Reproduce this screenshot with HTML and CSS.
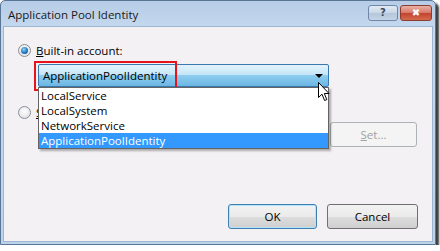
FILE: index.html
```html
<!DOCTYPE html>
<html lang="en">
<head>
  <meta charset="UTF-8">
  <title>Application Pool Identity</title>
  <link rel="stylesheet" href="styles.css">
</head>
<body>
  <div class="window">
    <div class="titlebar">
      <span class="title">Application Pool Identity</span>
      <div class="caption-btns">
        <div class="cap help">?</div>
        <div class="cap close">&#10006;</div>
      </div>
    </div>

    <div class="content">
      <div class="option">
        <span class="radio checked"></span>
        <span class="label"><u>B</u>uilt-in account:</span>
      </div>

      <div class="combo-wrap">
        <div class="combo">
          <span>ApplicationPoolIdentity</span>
          <span class="arrow"></span>
        </div>
        <div class="highlight"></div>
        <ul class="droplist">
          <li>LocalService</li>
          <li>LocalSystem</li>
          <li>NetworkService</li>
          <li class="selected">ApplicationPoolIdentity</li>
        </ul>
        <svg class="cursor" width="13" height="20" viewBox="0 0 13 20">
          <path d="M0.5 0.5 L0.5 15.5 L4 12.2 L6.6 18.5 L8.8 17.6 L6.3 11.5 L11 11.5 Z" fill="#fff" stroke="#000" stroke-width="1"/>
        </svg>
      </div>

      <div class="option second">
        <span class="radio"></span>
        <span class="label"><u>S</u></span>
      </div>

      <div class="cred-row">
        <div class="textbox"></div>
        <button class="btn" disabled><u>S</u>et...</button>
      </div>

      <div class="actions">
        <button class="btn default">OK</button>
        <button class="btn cancel">Cancel</button>
      </div>
    </div>
  </div>
</body>
</html>
```

FILE: styles.css
```css
body {
  margin: 0;
  background: #ffffff;
  font-family: "Open Sans", "Liberation Sans", sans-serif;
  font-size: 11.5px;
  color: #000;
}
.window {
  width: 430px;
  height: 241px;
  padding: 0 2px 2px 2px;
  background: linear-gradient(#b7cce6, #c6d9ef 30px, #bcd3ec);
  border: 1px solid #5a7696;
  border-radius: 5px 5px 0 0;
  box-shadow: 3px 3px 2px rgba(0, 0, 0, 0.75);
  display: flex;
  flex-direction: column;
}
.titlebar {
  height: 25px;
  display: flex;
  align-items: center;
  justify-content: space-between;
  padding-left: 5px;
}
.title {
  font-size: 11.5px;
  color: #1a1a1a;
  margin-top: 2px;
}
.caption-btns {
  display: flex;
  gap: 2px;
  align-self: flex-start;
  margin-top: 4px;
  margin-right: 1px;
}
.cap {
  height: 14px;
  border-radius: 3px;
  font-family: "DejaVu Sans", sans-serif;
  font-size: 10px;
  font-weight: bold;
  line-height: 14px;
  text-align: center;
}
.help {
  width: 28px;
  border: 1px solid #6f88a8;
  background: linear-gradient(#e2eaf3, #c8d6e6 50%, #b4c6da 51%, #c4d4e6);
  color: #3a4a5e;
}
.close {
  width: 30px;
  border: 1px solid #8d3b2f;
  background: linear-gradient(#e8b0a2, #d8786a 50%, #c2432f 51%, #d46a4c);
  color: #fff;
}
.content {
  flex: 1;
  background: #f4f1f5;
  border: 1px solid #9fb6d0;
  padding: 16px 14px 12px 14px;
  display: flex;
  flex-direction: column;
}
.option {
  display: flex;
  align-items: center;
  gap: 5px;
  height: 14px;
}
.radio {
  width: 11px;
  height: 11px;
  border-radius: 50%;
  border: 1px solid #8a8f96;
  background: radial-gradient(circle at 50% 40%, #ffffff, #dcdcdc);
  position: relative;
}
.radio.checked::after {
  content: "";
  position: absolute;
  left: 2px;
  top: 2px;
  width: 7px;
  height: 7px;
  border-radius: 50%;
  background: radial-gradient(circle at 40% 35%, #8fd3ff, #1a6fb8 60%, #0a3f78);
}
.combo-wrap {
  position: relative;
  margin: 7px 0 0 20px;
}
.combo {
  height: 21px;
  border: 1px solid #3a78ad;
  border-radius: 2px;
  background: linear-gradient(#e4f3fc, #c6e6f8 45%, #8dcdef 50%, #6cb6e4);
  display: flex;
  align-items: center;
  justify-content: space-between;
  padding: 0 4px;
  width: 281px;
}
.arrow {
  width: 0;
  height: 0;
  border-left: 4px solid transparent;
  border-right: 4px solid transparent;
  border-top: 4px solid #000;
  margin-right: 1px;
}
.highlight {
  position: absolute;
  left: -4px;
  top: -3px;
  width: 139px;
  height: 26px;
  border: 2px solid #e8141c;
}
.droplist {
  position: absolute;
  left: 0;
  top: 23px;
  width: 289px;
  margin: 0;
  padding: 0;
  list-style: none;
  background: #fff;
  border: 1px solid #646464;
  box-shadow: 2px 2px 2px rgba(0, 0, 0, 0.3);
  z-index: 2;
}
.droplist li {
  height: 15px;
  line-height: 15px;
  padding-left: 2px;
}
.droplist li.selected {
  background: #3399ff;
  color: #fff;
}
.cursor {
  position: absolute;
  left: 280px;
  top: 18px;
  z-index: 3;
}
.second {
  margin-top: 18px;
}
.cred-row {
  display: flex;
  gap: 5px;
  margin: 3px 0 0 20px;
}
.textbox {
  width: 285px;
  height: 23px;
  border: 1px solid #aab0b8;
  background: #fff;
}
.btn {
  width: 87px;
  height: 25px;
  font-family: "Open Sans", "Liberation Sans", sans-serif;
  font-size: 11.5px;
  color: #000;
  border: 1px solid #707070;
  border-radius: 3px;
  background: linear-gradient(#f2f2f2, #ebebeb 50%, #dddddd 51%, #cfcfcf);
  padding: 0;
}
.btn:disabled {
  color: #a0a0a0;
  border-color: #adb2b5;
  background: #f4f4f4;
}
.default {
  border-color: #3c7fb1;
  box-shadow: inset 0 0 0 1px #b4e4fc;
  width: 89px;
}
.cancel {
  width: 91px;
}
.actions {
  margin-top: auto;
  display: flex;
  justify-content: flex-end;
  gap: 10px;
}
```
